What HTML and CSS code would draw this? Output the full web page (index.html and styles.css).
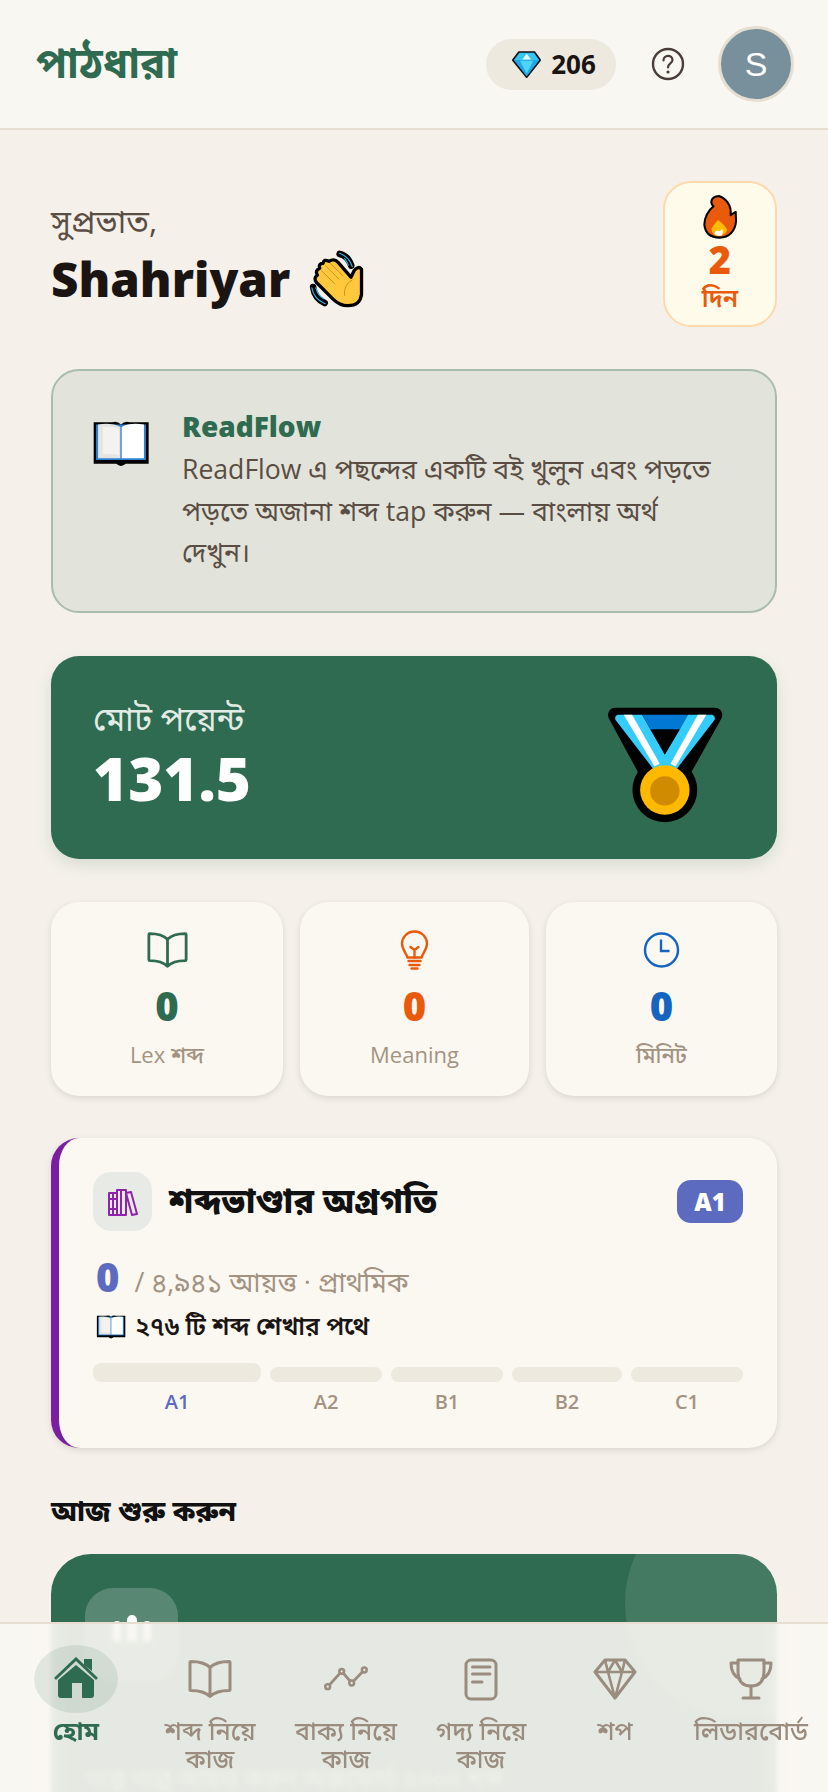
FILE: index.html
```html
<!DOCTYPE html>
<html lang="bn">
<head>
<meta charset="utf-8">
<title>পাঠধারা</title>
<link rel="stylesheet" href="styles.css">
</head>
<body>
<svg class="defs" width="0" height="0" aria-hidden="true">
  <symbol id="book-emoji" viewBox="40 55 172 150" preserveAspectRatio="none">
    <path d="M45 65H100Q115 60 126 72Q137 60 152 65H208V195H140Q126 208 112 195H45Z" fill="#000"/>
    <path d="M52 72H200V183H52Z" fill="#2f80d0"/>
    <path d="M58 72Q100 66 124 80V178H58Z" fill="#e4e4e0"/>
    <path d="M128 80Q150 66 194 72V178H128Z" fill="#fff"/>
    <path d="M72 80Q100 76 120 86V168Q100 162 72 166Z" fill="#f3f2ee"/>
  </symbol>
  <symbol id="book-line" viewBox="0 0 44 41">
    <path d="M22 9C17 4 10 3 3 3Q2 3 2 4V31Q2 32 3 32C10 32 17 33 22 38C27 33 34 32 41 32Q42 32 42 31V4Q42 3 41 3C34 3 27 4 22 9ZM22 9V38" fill="none" stroke="currentColor" stroke-width="3" stroke-linejoin="round"/>
  </symbol>
</svg>

<header class="topbar">
  <div class="logo">পাঠধারা</div>
  <div class="topbar-right">
    <div class="gems">
      <svg class="gem" viewBox="97 125 85 80"><path d="M117 128H163L180 152L140 203L99 152Z" fill="#35c6f4" stroke="#111" stroke-width="5" stroke-linejoin="round"/><path d="M103 152H177L140 200Z" fill="#1da6e8"/><path d="M127 150L140 133L153 150Z" fill="#e8fbff"/><path d="M120 154H160L140 192Z" fill="#4fd3fa"/></svg>
      <span>206</span>
    </div>
    <svg class="help" viewBox="0 0 36 36"><circle cx="18" cy="18" r="15" fill="none" stroke="#4a3f38" stroke-width="2.4"/><path d="M13.5 14.5C13.5 8.5 22.5 8.5 22.5 14C22.5 17.5 18 17.5 18 21.5" fill="none" stroke="#4a3f38" stroke-width="2.2" stroke-linecap="round"/><circle cx="18" cy="26" r="1.6" fill="#4a3f38"/></svg>
    <div class="avatar">S</div>
  </div>
</header>

<main class="page">
  <section class="greeting">
    <div>
      <p class="hello">সুপ্রভাত,</p>
      <h1 class="name">Shahriyar
        <svg class="wave" viewBox="58 238 168 178">
          <path d="M150 250Q175 255 185 285M70 350Q75 385 105 398" fill="none" stroke="#000" stroke-width="20" stroke-linecap="round"/>
          <path d="M150 248Q178 258 188 288M165 264Q172 272 176 284M66 352Q72 385 106 400M78 352Q84 375 102 385" fill="none" stroke="#2cb5e8" stroke-width="3.5" stroke-linecap="round"/>
          <path d="M216 296V372Q212 406 175 406Q150 406 130 386L80 336Q70 322 83 314Q74 300 90 293Q84 280 100 278Q102 264 118 272Q134 262 146 276L184 320L194 300Q206 284 216 296Z" fill="#ffc83d" stroke="#000" stroke-width="10" stroke-linejoin="round"/>
          <path d="M95 300L135 340M108 286L148 326M122 278L160 316M188 328Q160 345 165 375" fill="none" stroke="#d58f18" stroke-width="3" stroke-linecap="round"/>
        </svg>
      </h1>
    </div>
    <div class="streak">
      <svg class="fire" viewBox="1240 70 102 132"><path d="M1288 76C1262 78 1262 98 1272 106C1256 118 1245 140 1245 160C1248 188 1268 198 1290 198C1318 198 1336 178 1338 150L1337 122L1322 132C1326 105 1310 84 1288 76Z" fill="#ea5a0c" stroke="#000" stroke-width="6" stroke-linejoin="round"/><path d="M1285 146Q1306 160 1312 176Q1304 193 1286 193Q1268 193 1266 172Q1272 160 1285 146Z" fill="#ffb900"/><path d="M1275 188Q1275 176 1285 178Q1292 182 1298 172Q1302 182 1296 192Q1284 194 1275 188Z" fill="#fff"/></svg>
      <div class="streak-num">2</div>
      <div class="streak-unit">দিন</div>
    </div>
  </section>

  <section class="tip">
    <svg class="tip-icon"><use href="#book-emoji"/></svg>
    <div class="tip-body">
      <h2>ReadFlow</h2>
      <p>ReadFlow এ পছন্দের একটি বই খুলুন এবং পড়তে পড়তে অজানা শব্দ tap করুন — বাংলায় অর্থ দেখুন।</p>
    </div>
  </section>

  <section class="points">
    <div>
      <div class="points-label">মোট পয়েন্ট</div>
      <div class="points-value">131.5</div>
    </div>
    <svg class="medal" viewBox="140 80 350 350">
      <path d="M165 104H463L370 270H255Z" fill="#000" stroke="#000" stroke-width="44" stroke-linejoin="round"/>
      <circle cx="313" cy="328" r="97" fill="#000"/>
      <path d="M172 103H245L313 222L345 270H282L165 118Q162 106 172 103Z" fill="#33ccfb"/>
      <path d="M455 103H382L313 222L282 270H345L462 118Q465 106 455 103Z" fill="#33ccfb"/>
      <path d="M190 103H215L298 250L282 258Z" fill="#fff"/>
      <path d="M437 103H412L330 250L345 258Z" fill="#fff"/>
      <path d="M245 103H382L358 147H270Z" fill="#0078d4"/>
      <path d="M270 147H358L313 222Z" fill="#000"/>
      <circle cx="313" cy="328" r="74" fill="#ffb900"/>
      <circle cx="313" cy="331" r="44" fill="#d18b00"/>
    </svg>
  </section>

  <section class="stats">
    <div class="stat stat-green">
      <svg class="stat-icon"><use href="#book-line"/></svg>
      <div class="stat-num">0</div>
      <div class="stat-label">Lex শব্দ</div>
    </div>
    <div class="stat stat-orange">
      <svg class="stat-icon" viewBox="0 0 40 40"><path d="M20 1.500C12 1.500 7.500 8 7.500 13.500C7.500 19 11 22 13 27.500H27C29 22 32.500 19 32.500 13.500C32.500 8 28 1.500 20 1.500Z" fill="none" stroke="currentColor" stroke-width="2.400"/><path d="M16 17L20 20L24 17M20 20V27.500M14 31H26M15 35H25M17 38.500H23" fill="none" stroke="currentColor" stroke-width="2.400" stroke-linecap="round"/></svg>
      <div class="stat-num">0</div>
      <div class="stat-label">Meaning</div>
    </div>
    <div class="stat stat-blue">
      <svg class="stat-icon" viewBox="0 0 40 40"><circle cx="20" cy="20" r="16.500" fill="none" stroke="currentColor" stroke-width="2.400"/><path d="M19.500 9.500V21H28" fill="none" stroke="currentColor" stroke-width="2.400"/></svg>
      <div class="stat-num">0</div>
      <div class="stat-label">মিনিট</div>
    </div>
  </section>

  <section class="vocab">
    <div class="vocab-head">
      <div class="vocab-icon">
        <svg viewBox="0 0 32 30" width="32" height="30"><path d="M2 6H10V28H2ZM2 12H10M2 22H10M6 6V28M10 3H19V28H10ZM14 3V28M19 6L24 5L30 27L25 28Z" fill="none" stroke="#8e24aa" stroke-width="2" stroke-linejoin="round"/></svg>
      </div>
      <h2>শব্দভাণ্ডার অগ্রগতি</h2>
      <div class="badge">A1</div>
    </div>
    <div class="vocab-count"><strong>0</strong><span>/ ৪,৯৪১ আয়ত্ত · প্রাথমিক</span></div>
    <div class="vocab-path"><svg><use href="#book-emoji"/></svg><span>২৭৬ টি শব্দ শেখার পথে</span></div>
    <div class="levels">
      <div class="level level-on"><i></i><span>A1</span></div>
      <div class="level"><i></i><span>A2</span></div>
      <div class="level"><i></i><span>B1</span></div>
      <div class="level"><i></i><span>B2</span></div>
      <div class="level"><i></i><span>C1</span></div>
    </div>
  </section>

  <h3 class="section-title">আজ শুরু করুন</h3>

  <section class="hero">
    <div class="hero-icon">
      <svg viewBox="0 0 46 26" width="46" height="26"><path d="M4 10a4 4 0 0 1 8 0V26H4ZM18 5a5 5 0 0 1 10 0V26H18ZM34 10a4 4 0 0 1 8 0V26H34Z" fill="#fff"/></svg>
    </div>
    <p>গল্পে গল্পে আয়ত্ত করুন অক্সফোর্ড ৫০০০ শব্দ</p>
  </section>
</main>

<nav class="tabs">
  <a class="tab tab-on">
    <span class="tab-pill">
      <svg viewBox="0 0 44 44"><path d="M30 2H38V14L30 8Z" fill="currentColor"/><path d="M22 8L40 23V38Q40 41 37 41H28V26H18V41H7Q4 41 4 38V23Z" fill="currentColor"/><path d="M2 21L22 2L42 21" fill="none" stroke="currentColor" stroke-width="3" stroke-linecap="round"/></svg>
    </span>
    <span class="tab-label">হোম</span>
  </a>
  <a class="tab">
    <span class="tab-pill"><svg><use href="#book-line"/></svg></span>
    <span class="tab-label">শব্দ নিয়ে কাজ</span>
  </a>
  <a class="tab">
    <span class="tab-pill"><svg viewBox="0 0 44 44"><path d="M3.700 29.700L17.700 14.300L27.700 26L40.300 13" fill="none" stroke="currentColor" stroke-width="2.800"/><g fill="#e7e9e2" stroke="currentColor" stroke-width="2.500"><circle cx="3.700" cy="29.700" r="2.400"/><circle cx="17.700" cy="14.300" r="2.400"/><circle cx="27.700" cy="26" r="2.400"/><circle cx="40.300" cy="13" r="2.400"/></g></svg></span>
    <span class="tab-label">বাক্য নিয়ে কাজ</span>
  </a>
  <a class="tab">
    <span class="tab-pill"><svg viewBox="0 0 44 44"><rect x="7" y="3" width="30" height="39" rx="5" fill="none" stroke="currentColor" stroke-width="3"/><path d="M13.500 10H31M13.500 17H31M13.500 25H23" fill="none" stroke="currentColor" stroke-width="3" stroke-linecap="round"/></svg></span>
    <span class="tab-label">গদ্য নিয়ে কাজ</span>
  </a>
  <a class="tab">
    <span class="tab-pill"><svg viewBox="0 0 44 44"><path d="M12 3H32L42 15L22 41L2 15Z" fill="none" stroke="currentColor" stroke-width="3" stroke-linejoin="round"/><path d="M2 15H42M12 3L15 15L22 3L29 15L32 3M15 15L22 41L29 15" fill="none" stroke="currentColor" stroke-width="2.600" stroke-linejoin="round"/></svg></span>
    <span class="tab-label">শপ</span>
  </a>
  <a class="tab">
    <span class="tab-pill"><svg viewBox="0 0 44 44"><path d="M9 3H35V14Q35 29 22 29Q9 29 9 14Z" fill="none" stroke="currentColor" stroke-width="3" stroke-linejoin="round"/><path d="M9 6H2Q2 18 11 22M35 6H42Q42 18 33 22M22 29V41M14 41H30" fill="none" stroke="currentColor" stroke-width="3" stroke-linecap="round" stroke-linejoin="round"/></svg></span>
    <span class="tab-label">লিডারবোর্ড</span>
  </a>
</nav>
</body>
</html>
```

FILE: styles.css
```css
* { box-sizing: border-box; }
html, body { margin: 0; height: 100%; overflow: hidden; }
body {
  background: #f5f1ea;
  color: #1a1512;
  font-family: "Open Sans", "Noto Sans", "Noto Sans Bengali", sans-serif;
}
h1, h2, h3, p { margin: 0; }
.defs { position: absolute; }

.topbar {
  height: 130px;
  display: flex;
  align-items: center;
  justify-content: space-between;
  padding: 0 34px 0 36px;
  background: #f9f7f2;
  border-bottom: 2px solid #e6dfd1;
}
.logo { font-size: 42px; font-weight: 700; color: #2f6b50; }
.topbar-right { display: flex; align-items: center; }
.gems {
  width: 130px; height: 51px;
  display: flex; align-items: center; justify-content: center; gap: 10px;
  padding-left: 6px;
  background: #ede9df;
  border-radius: 26px;
  font-size: 26px; font-weight: 700;
  margin-right: 34px;
}
.gem { width: 29px; height: 27px; }
.help { width: 36px; height: 36px; margin-right: 32px; }
.avatar {
  width: 76px; height: 76px;
  display: flex; align-items: center; justify-content: center;
  border-radius: 50%;
  background: #78909c;
  border: 3px solid #e6dfd1;
  color: #fff;
  font-size: 34px;
  font-family: "Liberation Sans", sans-serif;
}

.page { padding: 51px 51px 0; }
.greeting { display: flex; justify-content: space-between; align-items: flex-start; }
.hello { font-size: 32px; color: #5a4d43; line-height: 40px; margin-top: 20px; }
.name { font-size: 47.5px; font-weight: 800; line-height: 66px; margin-top: 5px; display: flex; align-items: center; gap: 19px; }
.wave { width: 56px; height: 59px; }
.streak {
  width: 114px; height: 146px;
  display: flex; flex-direction: column; align-items: center;
  background: #fffbeb;
  border: 2px solid #fdd9ab;
  border-radius: 28px;
  padding-top: 11px;
  color: #ea5a0c;
}
.fire { width: 36px; height: 45px; }
.streak-num { font-size: 38px; font-weight: 800; line-height: 40px; }
.streak-unit { font-size: 25px; font-weight: 600; line-height: 36px; }

.tip {
  margin-top: 42px;
  height: 244px;
  display: flex;
  gap: 32px;
  padding: 48px 40px 0 39px;
  background: #e2e3da;
  border: 2px solid #a9bcae;
  border-radius: 28px;
}
.tip-icon { width: 58px; height: 48px; flex: none; }
.tip-body { margin-top: -13px; }
.tip-body h2 { font-size: 28px; font-weight: 800; color: #2f6b50; line-height: 40px; }
.tip-body p { max-width: 535px; font-size: 26.6px; line-height: 41.5px; color: #5a4d43; margin-top: 3px; }

.points {
  margin-top: 43px;
  height: 203px;
  display: flex; align-items: center; justify-content: space-between;
  padding: 0 53px 0 42px;
  background: #2f6b50;
  border-radius: 28px;
  box-shadow: 0 6px 16px rgba(47, 107, 80, .15);
  color: #fff;
}
.points-label { font-size: 33px; color: #e3ebe6; line-height: 42px; margin-top: -4px; }
.points-value { font-size: 60px; font-weight: 800; line-height: 72px; margin-top: 2px; }
.medal { width: 117px; height: 117px; margin-top: 16px; }

.stats { margin-top: 43px; display: grid; grid-template-columns: 232fr 229fr 231fr; gap: 17px; }
.stat {
  height: 194px;
  display: flex; flex-direction: column; align-items: center;
  padding-top: 28px;
  background: #fbf8f2;
  border-radius: 28px;
  box-shadow: 0 2px 6px rgba(60, 50, 30, .14);
}
.stat-icon { width: 41px; height: 40px; }
.stat-num { font-size: 40px; font-weight: 800; line-height: 54px; margin-top: 9px; }
.stat-label { font-size: 22px; font-weight: 500; color: #a39382; line-height: 30px; margin-top: 6px; }
.stat-green { color: #2f6b50; }
.stat-orange { color: #ea5a0c; }
.stat-blue { color: #1565c0; }

.vocab {
  margin-top: 42px;
  height: 310px;
  padding: 34px 34px 0 34px;
  background: #fbf8f2;
  border-left: 8px solid #7b1fa2;
  border-radius: 28px;
  box-shadow: 0 2px 6px rgba(60, 50, 30, .14);
}
.vocab-head { display: flex; align-items: center; }
.vocab-icon {
  width: 59px; height: 59px;
  display: flex; align-items: center; justify-content: center;
  background: #e8ebe5;
  border-radius: 18px;
}
.vocab-head h2 { flex: 1; margin-left: 17px; font-size: 34px; font-weight: 800; color: #111; }
.badge {
  width: 66px; height: 43px;
  display: flex; align-items: center; justify-content: center;
  background: #5c6bc0;
  border-radius: 14px;
  color: #fff;
  font-size: 24px; font-weight: 800;
}
.vocab-count { margin-top: 28px; display: flex; align-items: flex-end; gap: 15px; height: 42px; padding-left: 3px; }
.vocab-count strong { font-size: 40px; font-weight: 800; color: #5c6bc0; line-height: 44px; margin-bottom: 2px; }
.vocab-count span { font-size: 27px; color: #a39382; line-height: 38px; }
.vocab-path { margin-top: 8px; display: flex; align-items: center; gap: 9px; padding-left: 3px; font-size: 24.5px; font-weight: 600; color: #1a1512; line-height: 34px; }
.vocab-path svg { width: 30px; height: 25px; }
.levels { margin-top: 20px; display: grid; grid-template-columns: 168fr 112fr 112fr 110fr 112fr; gap: 9px; }
.level { display: flex; flex-direction: column; align-items: center; justify-content: flex-end; }
.level i { display: block; width: 100%; height: 15px; background: #ede9df; border-radius: 8px; }
.level span { font-size: 20px; font-weight: 600; color: #a39382; line-height: 40px; }
.level-on i { height: 19px; }
.level-on span { color: #5c6bc0; }

.section-title { margin-top: 44px; font-size: 28px; font-weight: 800; color: #111; line-height: 36px; }

.hero {
  position: relative;
  overflow: hidden;
  margin-top: 26px;
  height: 320px;
  padding: 34px;
  background: #2f6b50;
  border-radius: 40px;
  color: rgba(255, 255, 255, .45);
}
.hero::before {
  content: "";
  position: absolute;
  top: -66px; right: -78px;
  width: 230px; height: 230px;
  border-radius: 50%;
  background: rgba(255, 255, 255, .1);
}
.hero-icon {
  width: 93px; height: 93px;
  display: flex; align-items: flex-start; justify-content: center;
  padding-top: 27px;
  background: rgba(255, 255, 255, .2);
  border-radius: 28px;
}
.hero p { margin-top: 85px; font-size: 24px; line-height: 24px; }

.tabs {
  position: fixed;
  left: 0; right: 0; bottom: 0;
  height: 170px;
  display: grid;
  grid-template-columns: 134px 134px 138px 132px 136px 136px;
  padding: 21px 0 0 9px;
  background: linear-gradient(90deg, rgba(249, 247, 242, .98), rgba(249, 247, 242, .9) 70px, rgba(249, 247, 242, .9) calc(100% - 70px), rgba(249, 247, 242, .98));
  border-top: 2px solid #e6dfd1;
  backdrop-filter: blur(2px);
  color: #9a8c7e;
}
.tab { display: flex; flex-direction: column; align-items: center; text-align: center; }
.tab-pill { width: 84px; height: 68px; display: flex; align-items: center; justify-content: center; border-radius: 34px; }
.tab-pill svg { width: 44px; height: 44px; }
.tab-label { font-size: 25px; font-weight: 500; line-height: 28px; margin-top: 3px; max-width: 124px; }
.tab-on { color: #2f6b50; }
.tab-on .tab-pill { background: rgba(47, 107, 80, .12); border-radius: 42px / 34px; }
.tab-on .tab-label { font-weight: 700; }
```
